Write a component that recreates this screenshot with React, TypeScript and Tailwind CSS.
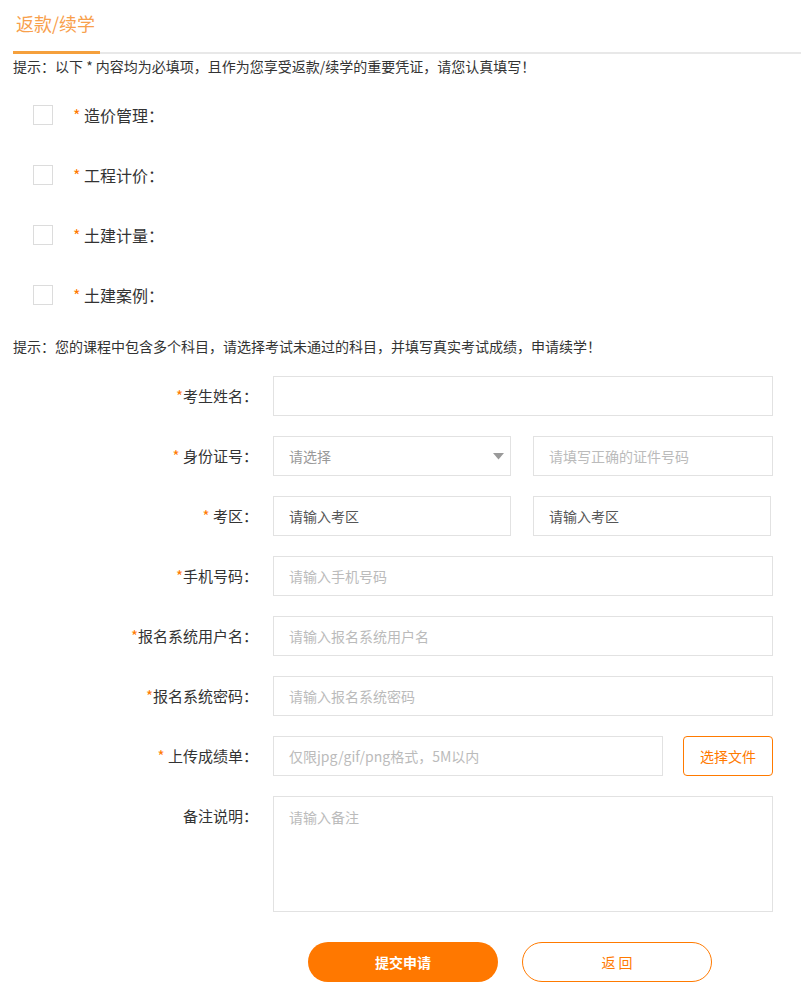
import React from "react";

const font = { fontFamily: '"Noto Sans CJK SC", "Noto Sans", sans-serif' };

function Label({ children, star = true, space = false }: { children: React.ReactNode; star?: boolean; space?: boolean }) {
  return (
    <div className="w-[258px] shrink-0 text-right text-[15px] text-[#333] leading-[40px]">
      {star && <span className="text-[#ff7a00]">*</span>}
      {space && <span> </span>}
      {children}
    </div>
  );
}

function Input({ placeholder, value, w = "w-[500px]" }: { placeholder?: string; value?: string; w?: string }) {
  return (
    <div className={`${w} h-[40px] border border-[#e2e2e2] flex items-center px-[15px] text-[14px]`}>
      {value ? <span className="text-[#555]">{value}</span> : <span className="text-[#bbb]">{placeholder}</span>}
    </div>
  );
}

export default function App() {
  const subjects = ["造价管理：", "工程计价：", "土建计量：", "土建案例："];
  return (
    <div className="w-[801px] min-h-[987px] bg-white" style={font}>
      <div className="ml-[13px] border-b-2 border-[#e8e8e8] flex">
        <div className="w-[87px] h-[54px] -mb-[2px] border-b-[3px] border-[#f5a03c] pl-[3px] pt-[8px] text-[18px] leading-[30px] text-[#f8a04c]">
          返款/续学
        </div>
      </div>
      <div className="mt-[2px] ml-[13px] text-[14px] leading-[20px] text-[#333]">
        提示：以下 * 内容均为必填项，且作为您享受返款/续学的重要凭证，请您认真填写！
      </div>
      <div className="mt-[9px]">
        {subjects.map((s) => (
          <div key={s} className="h-[60px] flex items-center pl-[33px]">
            <div className="w-[20px] h-[20px] border border-[#dcdcdc] bg-white" />
            <div className="ml-[20px] text-[16px] text-[#333]">
              <span className="text-[#ff7a00]">*</span> {s}
            </div>
          </div>
        ))}
      </div>
      <div className="mt-[11px] ml-[13px] text-[14px] leading-[20px] text-[#333]">
        提示：您的课程中包含多个科目，请选择考试未通过的科目，并填写真实考试成绩，申请续学！
      </div>
      <div className="mt-[20px] flex flex-col gap-[20px]">
        <div className="flex">
          <Label>考生姓名：</Label>
          <div className="ml-[15px]">
            <Input placeholder="" />
          </div>
        </div>
        <div className="flex">
          <Label space>身份证号：</Label>
          <div className="ml-[15px] flex gap-[22px]">
            <div className="relative w-[238px] h-[40px] border border-[#e2e2e2] flex items-center px-[15px] text-[14px] text-[#999]">
              请选择
              <svg className="absolute right-[6px] top-[16px]" width="11" height="7" viewBox="0 0 11 7">
                <polygon points="0,0 11,0 5.5,6.5" fill="#9a9a9a" />
              </svg>
            </div>
            <Input w="w-[240px]" placeholder="请填写正确的证件号码" />
          </div>
        </div>
        <div className="flex">
          <Label space>考区：</Label>
          <div className="ml-[15px] flex gap-[22px]">
            <Input w="w-[238px]" value="请输入考区" />
            <Input w="w-[238px]" value="请输入考区" />
          </div>
        </div>
        <div className="flex">
          <Label>手机号码：</Label>
          <div className="ml-[15px]">
            <Input placeholder="请输入手机号码" />
          </div>
        </div>
        <div className="flex">
          <Label>报名系统用户名：</Label>
          <div className="ml-[15px]">
            <Input placeholder="请输入报名系统用户名" />
          </div>
        </div>
        <div className="flex">
          <Label>报名系统密码：</Label>
          <div className="ml-[15px]">
            <Input placeholder="请输入报名系统密码" />
          </div>
        </div>
        <div className="flex">
          <Label space>上传成绩单：</Label>
          <div className="ml-[15px] flex gap-[20px]">
            <Input w="w-[390px]" placeholder="仅限jpg/gif/png格式，5M以内" />
            <div className="w-[90px] h-[40px] border border-[#ff7a00] rounded-[4px] flex items-center justify-center text-[14px] text-[#ff7a00]">
              选择文件
            </div>
          </div>
        </div>
        <div className="flex">
          <Label star={false}>备注说明：</Label>
          <div className="ml-[15px]">
            <div className="w-[500px] h-[116px] border border-[#e2e2e2] px-[15px] pt-[8px] text-[14px] leading-[24px] text-[#bbb]">
              请输入备注
            </div>
          </div>
        </div>
      </div>
      <div className="mt-[30px] ml-[308px] flex gap-[24px]">
        <div className="w-[190px] h-[40px] rounded-full bg-[#ff7800] flex items-center justify-center text-[14px] font-bold text-white">
          提交申请
        </div>
        <div className="w-[190px] h-[40px] rounded-full border border-[#ff7a00] flex items-center justify-center text-[14px] text-[#ff7a00]">
          返 回
        </div>
      </div>
    </div>
  );
}
